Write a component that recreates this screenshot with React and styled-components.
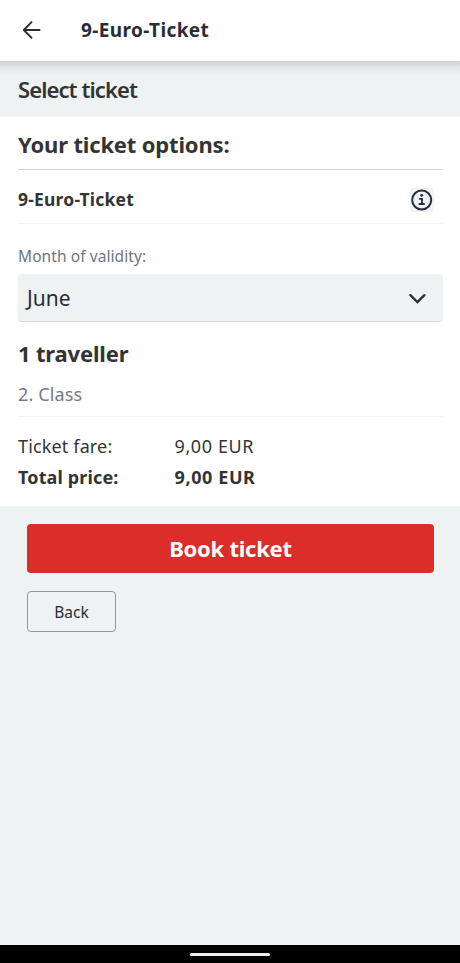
import styled, { createGlobalStyle } from "styled-components";

const GlobalStyle = createGlobalStyle`
  *, *::before, *::after {
    box-sizing: border-box;
  }
  body {
    margin: 0;
    font-family: "Noto Sans", sans-serif;
    color: #333434;
    background-color: #eef2f3;
  }
  h1, h2, h3, p, dl, dt, dd {
    margin: 0;
  }
  button {
    font-family: inherit;
    cursor: pointer;
  }
`;

const Screen = styled.div`
  display: flex;
  flex-direction: column;
  height: 963px;
  overflow: hidden;
`;
const AppBar = styled.header`
  flex-shrink: 0;
  display: flex;
  align-items: center;
  height: 61px;
  padding: 0 20px 1px;
  background-color: #fff;
`;
const IconButton = styled.button`
  display: flex;
  align-items: center;
  justify-content: center;
  flex-shrink: 0;
  width: 24px;
  height: 24px;
  padding: 0;
  border: none;
  border-radius: 3px;
  color: #282d37;
  background-color: ${(props) => props.$bg || "transparent"};
`;
const Text = styled.span`
  display: block;
  white-space: nowrap;
  font-size: ${(props) => props.$size}px;
  font-weight: ${(props) => props.$weight || 400};
  letter-spacing: ${(props) => props.$spacing || 0}px;
  line-height: 1.4;
  color: ${(props) => props.$color || "inherit"};
`;
const AppTitle = styled(Text)`
  margin-left: 37px;
`;
const SectionBar = styled.div`
  flex-shrink: 0;
  display: flex;
  align-items: center;
  height: 56px;
  padding: 1px 18px 0;
  background: linear-gradient(#cdd0d1, #dfe2e3 5px, #eaeeef 10px, #eef2f3 14px);
`;
const Card = styled.main`
  flex-shrink: 0;
  height: 389px;
  padding: 0 17px 0 18px;
  background-color: #fff;
`;
const Row = styled.div`
  display: flex;
  align-items: center;
  justify-content: space-between;
  height: ${(props) => props.$height}px;
  padding-top: ${(props) => props.$top || 0}px;
  padding-right: ${(props) => props.$right || 0}px;
  border-bottom: ${(props) => (props.$line ? `1px solid ${props.$line}` : "none")};
`;
const Select = styled.button`
  display: flex;
  align-items: center;
  justify-content: space-between;
  width: 100%;
  height: 48px;
  padding: 2px 17px 0 9px;
  border: none;
  border-bottom: 1px solid #d9dddf;
  border-radius: 4px;
  color: #282d37;
  background-color: #eef2f3;
`;
const Prices = styled.dl`
  display: grid;
  grid-template-columns: 156.5px 1fr;
  grid-auto-rows: 31px;
  align-items: center;
  padding-top: 14px;
`;
const Actions = styled.footer`
  display: flex;
  flex-direction: column;
  align-items: flex-start;
  gap: 18px;
  flex: 1;
  padding: 18px 26px 0 27px;
`;
const BookButton = styled.button`
  display: flex;
  align-items: center;
  justify-content: center;
  width: 100%;
  height: 49px;
  border: none;
  border-radius: 4px;
  color: #fff;
  background-color: #db2d2a;
`;
const BackButton = styled.button`
  display: flex;
  align-items: center;
  justify-content: center;
  width: 89px;
  height: 41px;
  padding: 2px 0 0;
  border: 1px solid #91959d;
  border-radius: 4px;
  color: #282d37;
  background-color: transparent;
`;
const NavBar = styled.div`
  flex-shrink: 0;
  display: flex;
  justify-content: center;
  height: 18px;
  padding-top: 8px;
  background-color: #000;
`;
const Handle = styled.div`
  width: 80px;
  height: 3px;
  border-radius: 2px;
  background-color: #ededed;
`;

function ArrowIcon() {
  return (
    <svg width="24" height="24" viewBox="0 0 24 24" fill="none" stroke="currentColor" strokeWidth="1.9">
      <path d="M20.3 12H3.8M12 3.7L3.8 12l8.2 8.3" strokeLinejoin="round" />
    </svg>
  );
}

function InfoIcon() {
  return (
    <svg width="24" height="24" viewBox="0 0 24 24" fill="none" stroke="currentColor">
      <circle cx="11.7" cy="12" r="9.5" strokeWidth="2" />
      <path d="M9.2 10.8h2.8v5.1M8.7 16h6" strokeWidth="1.8" />
      <circle cx="11.7" cy="7.3" r="1.4" fill="currentColor" stroke="none" />
    </svg>
  );
}

function ChevronIcon() {
  return (
    <svg width="18" height="18" viewBox="0 0 18 18" fill="none" stroke="currentColor" strokeWidth="2.3">
      <path d="M2.4 5.1L9.4 12.1l7-7" strokeLinecap="round" />
    </svg>
  );
}

function App() {
  return (
    <>
      <GlobalStyle />
      <Screen>
        <AppBar>
          <IconButton aria-label="Go back">
            <ArrowIcon />
          </IconButton>
          <AppTitle as="h1" $size={19} $weight={700} $spacing={0.4} $color="#282d37">
            9-Euro-Ticket
          </AppTitle>
        </AppBar>
        <SectionBar>
          <Text as="h2" $size={22} $weight={600} $spacing={-0.9}>
            Select ticket
          </Text>
        </SectionBar>
        <Card>
          <Row $height={53} $top={2} $line="#d5d6d8">
            <Text as="h2" $size={22} $weight={700} $spacing={-0.17}>
              Your ticket options:
            </Text>
          </Row>
          <Row $height={54} $top={6} $right={9} $line="#f3f4f5">
            <Text as="h3" $size={17.5} $weight={700} $spacing={0.2}>
              9-Euro-Ticket
            </Text>
            <IconButton aria-label="Ticket information" $bg="#f0f3f5">
              <InfoIcon />
            </IconButton>
          </Row>
          <Row $height={50} $top={16}>
            <Text $size={15.5} $spacing={0.08} $color="#6f7582">
              Month of validity:
            </Text>
          </Row>
          <Select>
            <Text $size={21}>June</Text>
            <ChevronIcon />
          </Select>
          <Row $height={50} $top={12}>
            <Text as="h2" $size={22} $weight={700} $spacing={-0.17}>
              1 traveller
            </Text>
          </Row>
          <Row $height={45} $top={2} $line="#f3f4f5">
            <Text $size={18} $spacing={0.15} $color="#747985">
              2. Class
            </Text>
          </Row>
          <Prices>
            <Text as="dt" $size={18} $spacing={0.15}>Ticket fare:</Text>
            <Text as="dd" $size={18} $spacing={0.6}>9,00 EUR</Text>
            <Text as="dt" $size={18} $weight={700} $spacing={0.13}>Total price:</Text>
            <Text as="dd" $size={18} $weight={700} $spacing={0.6}>9,00 EUR</Text>
          </Prices>
        </Card>
        <Actions>
          <BookButton>
            <Text $size={22} $weight={700} $spacing={-0.25}>Book ticket</Text>
          </BookButton>
          <BackButton>
            <Text $size={15.5}>Back</Text>
          </BackButton>
        </Actions>
        <NavBar>
          <Handle />
        </NavBar>
      </Screen>
    </>
  );
}

export default App;
